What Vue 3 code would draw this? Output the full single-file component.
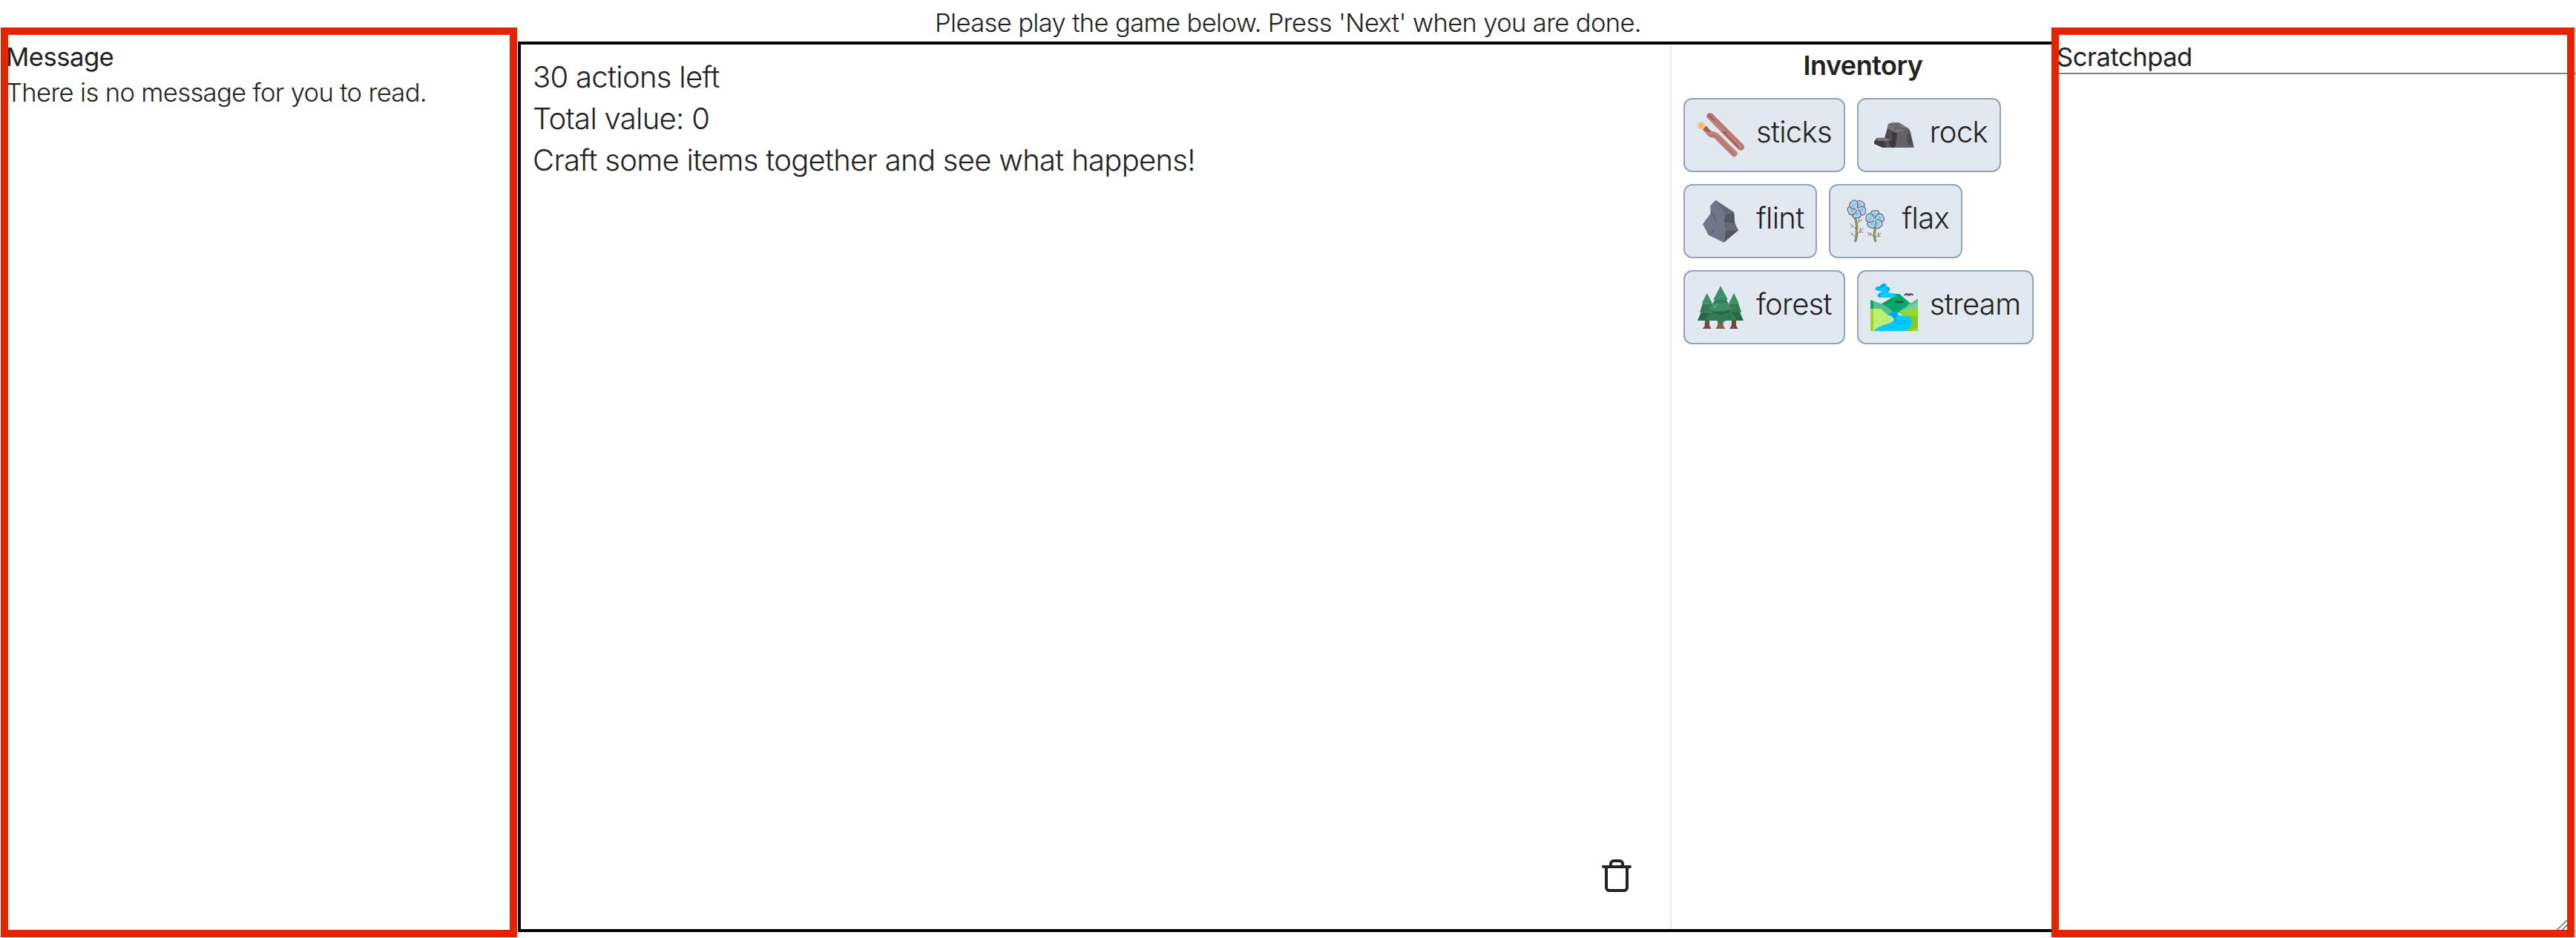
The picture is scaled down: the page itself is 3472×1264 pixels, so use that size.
<script setup>
const items = ['sticks', 'rock', 'flint', 'flax', 'forest', 'stream']
const petals = [0, 72, 144, 216, 288]
</script>

<template>
  <div class="page">
    <header class="instructions">Please play the game below. Press 'Next' when you are done.</header>
    <main class="columns">
      <section class="side message">
        <h2>Message</h2>
        <p>There is no message for you to read.</p>
      </section>

      <section class="game">
        <div class="board">
          <div class="status">
            <p>30 actions left</p>
            <p>Total value: 0</p>
            <p>Craft some items together and see what happens!</p>
          </div>
          <svg class="trash" viewBox="0 0 24 24">
            <path d="M3 6h18M19 6v14c0 1-1 2-2 2H7c-1 0-2-1-2-2V6M8 6V4c0-1 1-2 2-2h4c1 0 2 1 2 2v2" />
          </svg>
        </div>
        <aside class="inventory">
          <h3>Inventory</h3>
          <div class="items">
            <div v-for="item in items" :key="item" class="item">
              <svg v-if="item === 'sticks'" class="icon" viewBox="141 360 192 192">
                <path d="M181 379Q183 366 195 366L204 370L331 497Q335 507 329 514Q321 521 311 516L181 384Z" fill="#b5766c" />
                <path d="M184 386L195 372L323 501L311 516Z" fill="#bd8177" />
                <path d="M191 373l20 20q6 5 0 7l-22-20zM240 441l25 3-8 5 54 53-3 4-50-49z" fill="#9b5650" />
                <path d="M165 434L178 418L193 434Q201 442 215 443L228 450L304 524Q308 531 303 538Q296 547 286 543L211 468Q189 465 183 455Z" fill="#bf857b" />
                <path d="M165 434L178 418L193 434L199 444Q181 447 165 434Z" fill="#a4625a" />
                <path d="M193 456q18-3 28 7l72 72" stroke="#b5766c" stroke-width="7" fill="none" />
                <path d="M141 419L148 404Q156 399 165 404L175 409Q176 422 163 434L155 433Q141 428 141 419Z" fill="#fec98a" />
                <path d="M153 406l13 7-2 8-8 8-4-8z" fill="#f5b069" />
              </svg>

              <svg v-else-if="item === 'rock'" class="icon" viewBox="123 120 192 192">
                <path d="M195 172L211 166L239 166L278 190L286 207L299 266H175L181 231Z" fill="#5b595e" />
                <path d="M195 172L211 166L239 166L278 193L231 207L192 191Z" fill="#777479" />
                <path d="M192 190L214 201L205 236L215 245L208 266L178 235Z" fill="#4c4a4f" />
                <path d="M211 205L229 206L222 266H209Z" fill="#39373c" />
                <path d="M231 209L276 195L269 232L280 266H226Z" fill="#656267" />
                <path d="M281 209L298 266L276 238Z" fill="#4a484d" />
                <path d="M195 172l20 3 6 10 20 2 33 6M212 204l17-17M231 207l-9 58M278 193l-6 39 10 32M219 170l18 7" fill="none" stroke="#403e43" stroke-width="2" />
                <path d="M138 242L148 227L185 227L205 234L219 266H171L139 252Z" fill="#57555a" />
                <path d="M147 228L185 227L205 235L185 241L155 237Z" fill="#7a777c" />
                <path d="M138 242l17-4-3 18-13-5zM180 241l7 25h-16l-19-10 5-16zM204 235l15 31h-12l-11-23z" fill="#3c3a3f" />
              </svg>

              <svg v-else-if="item === 'flint'" class="icon" viewBox="111 108 192 192">
                <path d="M187 119L261 168L265 213L279 241L220 290L158 260L135 216L166 174V142Z" fill="#70758a" />
                <path d="M187 119L261 168L225 180Z" fill="#656a73" />
                <path d="M225 180L261 168L265 213L218 208Z" fill="#535860" />
                <path d="M218 208L265 213L279 241L227 243Z" fill="#656a73" />
                <path d="M227 243L279 241L220 290Z" fill="#535860" />
                <path d="M187 119L225 180L218 208L227 243L220 290" stroke="#989daa" stroke-width="1.5" fill="none" stroke-dasharray="4 2" />
                <path d="M168 173q11 0 15 13 2 20 11 23M177 239q1 15-14 15" stroke="#575c6c" stroke-width="4" fill="none" />
              </svg>

              <svg v-else-if="item === 'flax'" class="icon" viewBox="102 108 192 192">
                <g fill="none">
                  <path d="M153 189Q164 218 160 245Q162 268 154 287M234 228Q235 247 231 258L237 288" stroke="#5f674d" stroke-width="9" />
                  <path d="M153 189Q164 218 160 245Q162 268 154 287M234 228Q235 247 231 258L237 288" stroke="#9bb943" stroke-width="4" />
                  <path d="M159 237L133 213M143 223l-7 8M162 213L182 197M169 208l1-13M162 257L188 233M174 246l2-16M172 249h15M157 269L135 248M143 257l-6 4M232 267L204 250M218 259l-1-10M215 258l-9 5M237 269L260 253M247 262l1-14M244 264l13 2" stroke="#675e63" stroke-width="2.5" />
                </g>
                <g v-for="(center, i) in [[161, 155], [234, 198]]" :key="i" :transform="`translate(${center[0]} ${center[1]}) rotate(${i ? 0 : 37}) scale(1.12)`">
                  <path v-for="angle in petals" :key="angle" :transform="`rotate(${angle})`" d="M0 0Q-18-9-15-24Q-11-34-2-32Q4-35 10-32Q18-27 14-15Q9-4 0 0Z" fill="#a9d5f3" stroke="#65565b" stroke-width="2.8" />
                  <path v-for="angle in petals" :key="'v' + angle" :transform="`rotate(${angle})`" d="M-5-13l-2-9M0-12v-13M6-13l3-8" stroke="#597f9d" stroke-width="1.5" />
                  <circle r="4" fill="#d8e4c5" stroke="#80a7b8" />
                </g>
              </svg>

              <svg v-else-if="item === 'forest'" class="icon" viewBox="111 96 192 192">
                <path d="M144 243h18v24l8 12h-35l8-12zM252 243h18v24l8 12h-35l8-12z" fill="#734b3d" />
                <path d="M196 246h22v20l8 13h-39l8-13z" fill="#855d4d" />
                <path d="M133 201H180L190 246H114ZM232 201H280L300 246H225Z" fill="#276846" />
                <path d="M136 172H169L190 213Q165 209 152 214Q136 207 123 213ZM244 172H277L292 213Q275 208 261 213L230 211Z" fill="#327b55" />
                <path d="M152 135L173 175Q162 180 152 176Q142 180 132 175ZM261 135L281 175Q272 180 261 176Q251 180 241 175Z" fill="#408e68" />
                <path d="M170 199H243L272 242Q252 249 235 242L217 253Q207 258 197 250L182 242Q158 249 143 243Z" fill="#327b55" />
                <path d="M168 203Q184 215 206 209L247 204L239 216Q223 214 207 224Q190 217 176 217Z" fill="#276846" />
                <path d="M186 159H228L255 201Q235 200 222 210Q207 202 192 210Q175 200 159 202Z" fill="#408e68" />
                <path d="M187 161H229L237 174Q220 169 207 175Q195 169 177 175Z" fill="#327b55" />
                <path d="M207 106L237 161Q222 165 207 159Q192 165 178 161Z" fill="#408e68" />
                <path d="M123 213q16-5 29 0 16-4 27-2M132 175q11 4 20 1 11 3 21-1M241 175q10 4 20 1 10 4 20-1" fill="none" stroke="#70a88b" stroke-width="1.5" />
                <g fill="#68aa86"><circle cx="212" cy="147" r="3" /><circle cx="184" cy="191" r="5" /><circle cx="192" cy="183" r="3" /></g>
                <g fill="#276846"><circle cx="228" cy="228" r="3" /><circle cx="241" cy="232" r="4" /></g>
              </svg>

              <svg v-else class="icon" viewBox="93 96 192 192">
                <path d="M136 179L160 166Q185 153 193 139L207 138L211 139L228 154L262 182L220 213H160Z" fill="#07a86c" />
                <path d="M136 179L165 163L180 153H190Q176 170 157 181L153 188Z" fill="#079b60" />
                <path d="M93 163Q122 172 149 182L187 212L168 225L93 200Z" fill="#58bf92" />
                <path d="M93 163L105 167V199H93Z" fill="#09a66a" />
                <path d="M285 158Q271 162 265 171L247 178L239 188L209 209H260L285 187Z" fill="#58bf92" />
                <path d="M285 166l-18 15-13 2-16 14-24 8-5 5 40-2 36-20z" fill="#75cda5" />
                <path d="M93 198H134L164 225Q178 234 187 240L168 256Q132 269 107 288H93Z" fill="#bfef72" />
                <path d="M93 198H105V288H93Z" fill="#96db23" />
                <path d="M203 213Q251 206 285 188V288H225L261 245Z" fill="#96db23" />
                <path d="M222 225H252Q282 232 285 222V274Q265 278 254 288H225L261 250Z" fill="#85c929" />
                <path d="M162 222L177 213L209 210Q196 218 208 224Q261 225 261 248Q259 271 237 288H105Q120 272 166 257Q188 248 187 240Q184 231 162 222Z" fill="#05ccff" />
                <path d="M162 222L177 213L209 210Q196 218 208 224L194 228 207 232H195v8q8 4 10 10l-13-2q0-18-30-26M212 245h32v4h-32zM195 258h43v5h-43zM165 270h33v5h-33z" fill="#03a9ee" />
                <path d="M119 109Q132 112 136 102Q144 93 154 97Q158 101 156 107L170 113Q174 121 165 130Q174 139 189 134Q197 140 192 149L184 153H128Q120 149 123 141L139 127L115 123Q109 116 119 109Z" fill="#05ccff" />
                <path d="M119 109Q132 112 136 102Q144 93 154 97Q158 101 156 107L170 113Q174 121 165 130L158 129q9-11-4-17-4-8-11-4-5 12-17 8zM112 117l8 1q5 4 18 4l1 5-24-4zM133 132l5 5q-8 2-9 15-10-5-6-11z" fill="#03a9ee" />
                <path d="M230 144q8-10 15-5l3 4 4-4q9-2 13 5M191 174q8-9 14-4l4 4 5-4q8-3 12 4" fill="none" stroke="#413c44" stroke-width="5" />
                <path d="M239 139l3 8M256 139l-2 8M201 168l4 8M217 168l-4 9" stroke="#413c44" stroke-width="3" />
              </svg>
              <span>{{ item }}</span>
            </div>
          </div>
        </aside>
      </section>

      <section class="side scratchpad">
        <h2>Scratchpad</h2>
        <div class="notes">
          <svg class="grip" viewBox="0 0 14 13"><path d="M.5 13L14 0M7.5 13L14 6.5" /></svg>
        </div>
      </section>
    </main>
  </div>
</template>

<style>
body {
  margin: 0;
  background: #fff;
}
</style>

<style scoped>
.page {
  height: 1264px;
  overflow: hidden;
  display: flex;
  flex-direction: column;
  font-family: Inter, "Liberation Sans", sans-serif;
  font-weight: 300;
  font-size: 34.6px;
  line-height: 48px;
  letter-spacing: -0.019em;
  color: #222;
}
h2, h3, p {
  margin: 0;
  font-size: inherit;
}
.instructions {
  height: 46px;
  padding-top: 6px;
  text-align: center;
}
.columns {
  display: flex;
  height: 1212px;
}
.side {
  position: relative;
  box-sizing: border-box;
}
.side h2 {
  font-weight: 400;
  letter-spacing: -0.014em;
}
.side::after {
  content: "";
  position: absolute;
  box-sizing: border-box;
  top: -15px;
  bottom: 1px;
  border: 10px solid #e42300;
  pointer-events: none;
}
.message {
  width: 698px;
  padding-left: 8px;
}
.message::after {
  left: 1px;
  right: 1px;
}
.game {
  box-sizing: border-box;
  display: flex;
  width: 2074px;
  height: 1200px;
  margin-top: 4px;
  border: 4px solid #000;
}
.board {
  flex: 1;
  display: flex;
  flex-direction: column;
  justify-content: space-between;
}
.status {
  padding: 16px;
  font-size: 40px;
  line-height: 56px;
  letter-spacing: -0.0175em;
}
.trash {
  align-self: flex-end;
  width: 48px;
  height: 48px;
  margin: 0 48px 48px;
  fill: none;
  stroke: #222;
  stroke-width: 2;
  stroke-linecap: round;
  stroke-linejoin: round;
}
.inventory {
  box-sizing: border-box;
  width: 517px;
  border-left: 2px solid #e5e7eb;
  padding: 0 0 0 16px;
}
.inventory h3 {
  font-size: 36px;
  line-height: 56px;
  font-weight: 600;
  letter-spacing: -0.0137em;
  text-align: center;
  padding-right: 15px;
}
.items {
  display: flex;
  flex-wrap: wrap;
  gap: 16px;
  margin-top: 16px;
}
.item {
  box-sizing: border-box;
  display: flex;
  gap: 16px;
  height: 100px;
  padding: 16px;
  border: 2px solid #94a3b8;
  border-radius: 12px;
  background: #e2e8f0;
  font-size: 40px;
  line-height: 56px;
  letter-spacing: -0.0175em;
}
.icon {
  width: 64px;
  height: 64px;
}
.scratchpad {
  flex: 1;
  display: flex;
  flex-direction: column;
}
.scratchpad h2 {
  height: 46px;
}
.scratchpad::after {
  left: -7px;
  right: 2px;
}
.notes {
  flex: 1;
  display: flex;
  justify-content: flex-end;
  align-items: flex-end;
  border-top: 2px solid #808080;
  padding: 0 12px 11px 0;
}
.grip {
  width: 14px;
  height: 13px;
  fill: none;
  stroke: #666;
  stroke-width: 1.5;
}
</style>
